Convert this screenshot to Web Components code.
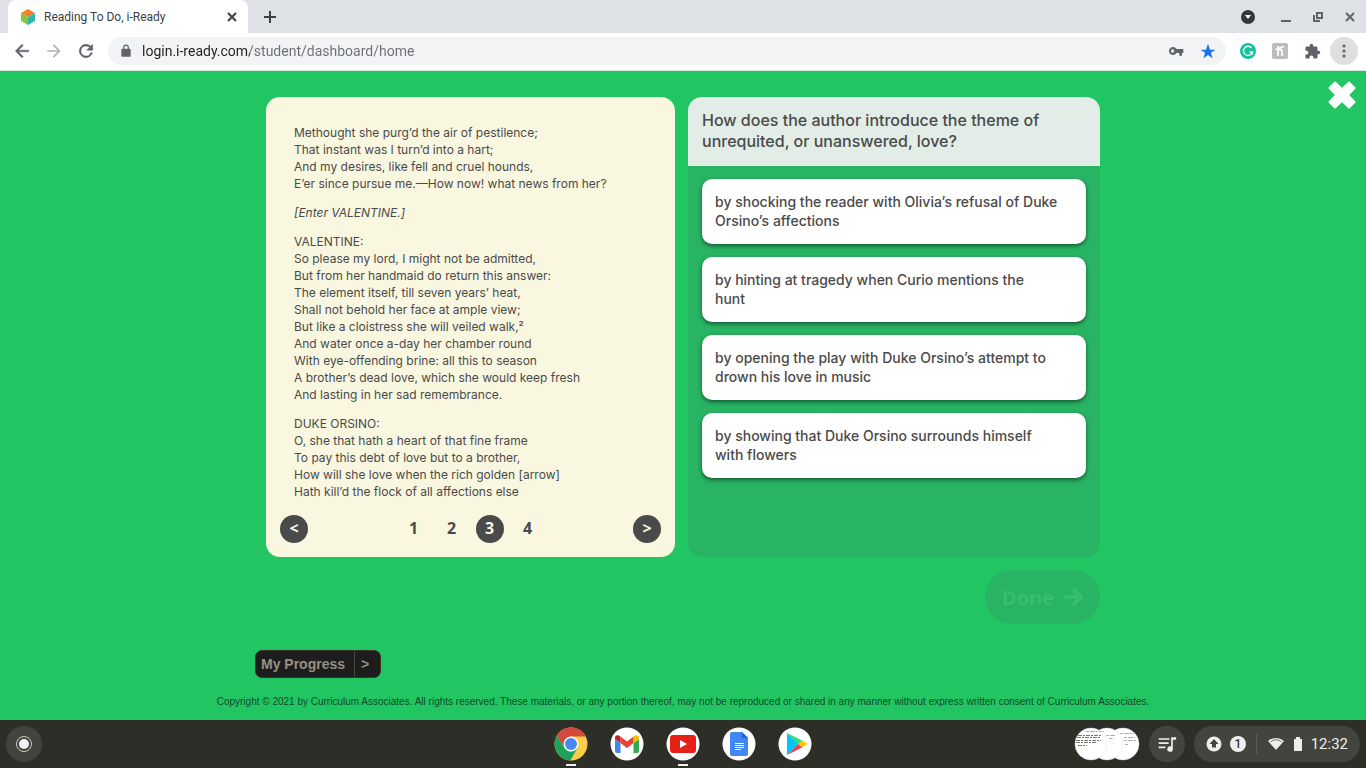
<!DOCTYPE html>
<html lang="en">
<head>
<meta charset="utf-8">
<meta name="viewport" content="width=device-width, initial-scale=1">
<title>Reading To Do, i-Ready</title>
<style>
  html, body {
    margin: 0;
    height: 100%;
  }
  body {
    display: flex;
    flex-direction: column;
    background: #21c663;
    font-family: Roboto, "Liberation Sans", sans-serif;
  }
  lesson-page {
    flex: 1;
  }
  reading-passage p {
    margin: 0 0 12px;
  }
</style>
</head>
<body>
<browser-bar></browser-bar>

<lesson-page>
  <reading-passage slot="passage" page="3" pages="4">
    <p>Methought she purg’d the air of pestilence;<br>
    That instant was I turn’d into a hart;<br>
    And my desires, like fell and cruel hounds,<br>
    E’er since pursue me.—How now! what news from her?</p>
    <p><em>[Enter VALENTINE.]</em></p>
    <p>VALENTINE:<br>
    So please my lord, I might not be admitted,<br>
    But from her handmaid do return this answer:<br>
    The element itself, till seven years’ heat,<br>
    Shall not behold her face at ample view;<br>
    But like a cloistress she will veiled walk,²<br>
    And water once a-day her chamber round<br>
    With eye-offending brine: all this to season<br>
    A brother’s dead love, which she would keep fresh<br>
    And lasting in her sad remembrance.</p>
    <p>DUKE ORSINO:<br>
    O, she that hath a heart of that fine frame<br>
    To pay this debt of love but to a brother,<br>
    How will she love when the rich golden [arrow]<br>
    Hath kill’d the flock of all affections else</p>
  </reading-passage>

  <question-panel slot="question">
    <span slot="title">How does the author introduce the theme of unrequited, or unanswered, love?</span>
    <answer-option>by shocking the reader with Olivia’s refusal of Duke<br>Orsino’s affections</answer-option>
    <answer-option>by hinting at tragedy when Curio mentions the<br>hunt</answer-option>
    <answer-option>by opening the play with Duke Orsino’s attempt to<br>drown his love in music</answer-option>
    <answer-option>by showing that Duke Orsino surrounds himself<br>with flowers</answer-option>
  </question-panel>
</lesson-page>

<system-shelf></system-shelf>

<script>
class BrowserBar extends HTMLElement {
    constructor() {
        super();
        this.attachShadow({ mode: 'open' });
        this.shadowRoot.innerHTML = `
        <style>
        :host {
            display: block;
            background: #fff;
            color: #3c4043;
            border-bottom: 1px solid #d3ead9;
        }
        .tabs {
            display: flex;
            align-items: center;
            height: 33px;
            padding: 0 8px;
            background: #dee1e6;
        }
        .tab {
            display: flex;
            align-items: center;
            box-sizing: border-box;
            width: 240px;
            height: 33px;
            padding: 0 8px 0 12px;
            gap: 8px;
            border-radius: 8px 8px 0 0;
            background: #fff;
            font-size: 12px;
        }
        .tab span {
            flex: 1;
        }
        .window {
            display: flex;
            align-items: center;
            margin-left: auto;
            gap: 16px;
        }
        .window button:first-child {
            margin-right: 6px;
        }
        button {
            display: grid;
            place-items: center;
            flex: none;
            width: 16px;
            height: 16px;
            padding: 0;
            border: 0;
            background: none;
            color: #5f6368;
        }
        .add {
            margin-left: 14px;
            color: #3c4043;
        }
        .tools {
            display: flex;
            align-items: center;
            height: 36px;
            padding: 0 8px 1px;
        }
        .tools > button {
            width: 28px;
            height: 28px;
            margin-right: 4px;
        }
        .tools > button:last-child {
            margin: 0;
            border-radius: 50%;
            background: #dfdfe0;
        }
        .address {
            display: flex;
            align-items: center;
            flex: 1;
            height: 28px;
            margin: 0 8px 0 4px;
            padding: 0 10px 0 11px;
            gap: 9px;
            border-radius: 14px;
            background: #f1f3f4;
        }
        .address button + button {
            margin-left: 7px;
        }
        input {
            flex: 1;
            min-width: 0;
            padding: 0;
            border: 0;
            outline: 0;
            font: 14px/20px Roboto, sans-serif;
            color: transparent;
            background: linear-gradient(90deg, #202124 108px, #6b6f74 108px);
            -webkit-background-clip: text;
            background-clip: text;
        }
        svg {
            display: block;
            fill: currentColor;
        }
        </style>
        <div class="tabs">
            <div class="tab">
                <svg width="16" height="16" viewBox="0 0 16 16">
                    <path fill="#f5812a" d="M8 0l7 4-7 4-7-4z"/>
                    <path fill="#8cc63f" d="M1 4l7 4v8l-7-4z"/>
                    <path fill="#2fb5b5" d="M15 4L8 8v8l7-4z"/>
                </svg>
                <span>Reading To Do, i-Ready</span>
                <button aria-label="Close tab"><svg width="16" height="16" viewBox="0 0 16 16"><path d="M4 4l8 8M12 4l-8 8" stroke="#3c4043" stroke-width="2"/></svg></button>
            </div>
            <button class="add" aria-label="New tab"><svg width="16" height="16" viewBox="0 0 16 16"><path d="M8 2v12M2 8h12" stroke="#3c4043" stroke-width="2"/></svg></button>
            <div class="window">
                <button aria-label="Search tabs"><svg width="14" height="14" viewBox="0 0 14 14"><circle cx="7" cy="7" r="7" fill="#35363a"/><path fill="#fff" d="M4 5h6L7 9z"/></svg></button>
                <button aria-label="Minimize"><svg width="16" height="16" viewBox="0 0 16 16"><path d="M3 11h10v2H3z"/></svg></button>
                <button aria-label="Restore"><svg width="16" height="16" viewBox="0 0 16 16"><path fill="none" stroke="currentColor" stroke-width="2" d="M7 4h5v5H7z"/><path fill="none" stroke="currentColor" stroke-width="2" d="M4 6v6h6"/></svg></button>
                <button aria-label="Close"><svg width="16" height="16" viewBox="0 0 16 16"><path d="M4 4l8 8M12 4l-8 8" stroke="currentColor" stroke-width="2"/></svg></button>
            </div>
        </div>
        <div class="tools">
            <button aria-label="Back"><svg width="20" height="20" viewBox="0 0 24 24"><path stroke="currentColor" stroke-width=".6" d="M20 11H7.800l5.600-5.600L12 4l-8 8 8 8 1.400-1.400L7.800 13H20z"/></svg></button>
            <button aria-label="Forward"><svg width="20" height="20" viewBox="0 0 24 24" fill-opacity=".5"><path d="M12 4l-1.400 1.400 5.600 5.600H4v2h12.200l-5.600 5.600L12 20l8-8z"/></svg></button>
            <button aria-label="Reload"><svg width="20" height="20" viewBox="0 0 24 24"><path stroke="currentColor" stroke-width=".6" d="M17.650 6.350A8 8 0 1 0 19.730 14h-2.080A6 6 0 1 1 12 6c1.660 0 3.140.69 4.220 1.780L13 11h7V4z"/></svg></button>
            <div class="address">
                <svg width="14" height="14" viewBox="0 0 24 24"><path fill="#5f6368" d="M18 8h-1V6A5 5 0 0 0 7 6v2H6a2 2 0 0 0-2 2v10a2 2 0 0 0 2 2h12a2 2 0 0 0 2-2V10a2 2 0 0 0-2-2zM9 6a3 3 0 0 1 6 0v2H9z"/></svg>
                <input type="text" aria-label="Address" value="login.i-ready.com/student/dashboard/home">
                <button aria-label="Passwords"><svg width="16" height="16" viewBox="0 0 24 24"><path fill-rule="evenodd" d="M12.650 9A6 6 0 1 0 12.650 15H17v4h4v-4h2V9zM7 14.500a2.500 2.500 0 1 1 0-5 2.500 2.500 0 0 1 0 5z"/></svg></button>
                <button aria-label="Bookmark"><svg width="16" height="16" viewBox="0 0 24 24"><path fill="#1a73e8" d="M12 18l7 5-2.700-8.200L23.500 10H15L12 1 9 10H.5l7.200 4.800L5 23z"/></svg></button>
            </div>
            <button aria-label="Grammarly"><svg width="16" height="16" viewBox="0 0 16 16"><circle cx="8" cy="8" r="8" fill="#15c39a"/><path fill="none" stroke="#fff" stroke-width="1.300" d="M11.500 4.800A4.600 4.600 0 1 0 12.500 9H9.500M12.400 8.500v3"/></svg></button>
            <button aria-label="Honey"><svg width="16" height="16" viewBox="0 0 16 16"><rect width="16" height="16" rx="2" fill="#bdbdbd"/><path fill="none" stroke="#fff" stroke-width="1.700" d="M6 3v10M6 8c1-2 4-2 4 0v5M3.500 6.500L12 3.500"/></svg></button>
            <button aria-label="Extensions"><svg width="17" height="17" viewBox="0 0 24 24"><path d="M20.500 11H19V7a2 2 0 0 0-2-2h-4V3.500a2.500 2.500 0 0 0-5 0V5H4a2 2 0 0 0-2 2v3.800h1.500a2.700 2.700 0 0 1 0 5.400H2V20a2 2 0 0 0 2 2h3.800v-1.500a2.700 2.700 0 0 1 5.400 0V22H17a2 2 0 0 0 2-2v-4h1.500a2.500 2.500 0 0 0 0-5z"/></svg></button>
            <button aria-label="Menu"><svg width="16" height="16" viewBox="0 0 16 16"><circle cx="8" cy="3" r="1.600"/><circle cx="8" cy="8" r="1.600"/><circle cx="8" cy="13" r="1.600"/></svg></button>
        </div>
        `;
    }
}

class LessonPage extends HTMLElement {
    constructor() {
        super();
        this.attachShadow({ mode: 'open' });
        this.shadowRoot.innerHTML = `
        <style>
        :host {
            display: grid;
            grid-template-columns: 1fr;
            grid-template-rows: 1fr auto;
            color: #4a4a4a;
        }
        .close, main {
            grid-area: 1 / 1;
        }
        .close {
            justify-self: end;
            align-self: start;
            z-index: 1;
            margin: 10px 10px 0 0;
            padding: 0;
            border: 0;
            background: none;
        }
        svg {
            display: block;
        }
        main {
            box-sizing: border-box;
            width: 100%;
            max-width: 856px;
            margin: 0 auto;
            padding-top: 26px;
        }
        .panels {
            display: grid;
            grid-template-columns: 409fr 412fr;
            gap: 13px;
            margin: 0 11px;
        }
        .actions {
            display: flex;
            justify-content: flex-end;
            margin: 13px 11px 26px;
        }
        .done {
            display: flex;
            align-items: center;
            height: 54px;
            padding: 0 17px;
            gap: 9px;
            border: 0;
            border-radius: 27px;
            background: #28b463;
            color: #38be6f;
            font: bold 20px "Open Sans", sans-serif;
        }
        .progress {
            display: flex;
            align-items: center;
            height: 28px;
            padding: 0;
            border: 1px solid #3a3328;
            border-radius: 7px;
            background: #1d1d1d;
            color: #989083;
            font: bold 14px "Liberation Sans", sans-serif;
        }
        .progress span {
            padding: 0 9px 0 5px;
            line-height: 26px;
        }
        .progress span + span {
            padding: 0 11px 0 6px;
            border-left: 1px solid #4a4a44;
        }
        footer {
            grid-row: 2;
            padding-bottom: 12px;
            text-align: center;
            font: 10px/12px "Liberation Sans", sans-serif;
            color: #0c4a24;
        }
        </style>
        <button class="close" aria-label="Close lesson">
            <svg width="28" height="28" viewBox="0 0 28 28"><path d="M7 1.500l7 6.700 7-6.700 5.500 5.500-6.700 7 6.700 7-5.500 5.500-7-6.700-7 6.700L1.500 21l6.700-7-6.700-7z" fill="#fff" stroke="#fff" stroke-width="2" stroke-linejoin="round"/></svg>
        </button>
        <main>
            <div class="panels">
                <slot name="passage"></slot>
                <slot name="question"></slot>
            </div>
            <div class="actions">
                <button class="done">Done <svg width="20" height="20" viewBox="0 0 20 20"><path d="M1 10h17M10 2l8 8-8 8" fill="none" stroke="currentColor" stroke-width="4" stroke-linejoin="round"/></svg></button>
            </div>
            <button class="progress"><span>My Progress</span><span>&gt;</span></button>
        </main>
        <footer>Copyright © 2021 by Curriculum Associates. All rights reserved. These materials, or any portion thereof, may not be reproduced or shared in any manner without express written consent of Curriculum Associates.</footer>
        `;
    }
}

class ReadingPassage extends HTMLElement {
    constructor() {
        super();
        this.attachShadow({ mode: 'open' });
    }

    connectedCallback() {
        const current = Number(this.getAttribute('page')) || 1;
        const total = Number(this.getAttribute('pages')) || 1;
        let numbers = '';
        for (let i = 1; i <= total; i++) {
            numbers += `<button${i === current ? ' class="on" aria-current="page"' : ''}>${i}</button>`;
        }
        this.shadowRoot.innerHTML = `
        <style>
        :host {
            display: flex;
            flex-direction: column;
            box-sizing: border-box;
            min-height: 460px;
            padding: 27px 14px 14px;
            border-radius: 14px;
            background: #f9f7e0;
        }
        .text {
            flex: 1;
            padding: 0 14px;
            font: 12px/17px Inter, sans-serif;
        }
        nav, .numbers {
            display: flex;
            justify-content: space-between;
            gap: 10px;
        }
        button {
            width: 28px;
            height: 28px;
            padding: 0 0 2px;
            border: 0;
            border-radius: 50%;
            background: none;
            color: #4a4a4a;
            font: bold 16px/26px "Open Sans", sans-serif;
        }
        .on, nav > button {
            background: #4a4a4a;
            color: #f9f7e0;
        }
        </style>
        <div class="text"><slot></slot></div>
        <nav>
            <button aria-label="Previous page">&lt;</button>
            <div class="numbers">${numbers}</div>
            <button aria-label="Next page">&gt;</button>
        </nav>
        `;
    }
}

class QuestionPanel extends HTMLElement {
    constructor() {
        super();
        this.attachShadow({ mode: 'open' });
        this.shadowRoot.innerHTML = `
        <style>
        :host {
            display: block;
            overflow: hidden;
            border-radius: 14px;
            background: #28b463;
        }
        h1 {
            margin: 0;
            padding: 13px 14px 14px;
            background: #e1ede6;
            font: 500 16px/21px Inter, sans-serif;
        }
        .answers {
            display: grid;
            gap: 13px;
            padding: 13px 14px;
        }
        </style>
        <h1><slot name="title"></slot></h1>
        <div class="answers"><slot></slot></div>
        `;
    }
}

class AnswerOption extends HTMLElement {
    constructor() {
        super();
        this.attachShadow({ mode: 'open' });
        this.shadowRoot.innerHTML = `
        <style>
        :host {
            display: block;
        }
        button {
            display: block;
            width: 100%;
            padding: 13px 13px 14px;
            border: 0;
            border-radius: 10px;
            background: #fff;
            box-shadow: 0 2px 4px rgba(0, 0, 0, .5);
            color: #4a4a4a;
            font: 500 14px/19px Inter, sans-serif;
            text-align: left;
        }
        </style>
        <button><slot></slot></button>
        `;
    }
}

class SystemShelf extends HTMLElement {
    constructor() {
        super();
        this.attachShadow({ mode: 'open' });
        this.shadowRoot.innerHTML = `
        <style>
        :host {
            display: grid;
            grid-template-columns: 1fr auto 1fr;
            align-items: center;
            height: 48px;
            padding: 0 6px;
            background: #2e2e28;
            color: #eee;
        }
        button {
            display: grid;
            place-items: center;
            height: 36px;
            padding: 0;
            border: 0;
            border-radius: 18px;
            background: none;
            color: inherit;
        }
        svg {
            display: block;
        }
        .round {
            width: 36px;
            background: #44443f;
        }
        .apps {
            display: flex;
            align-items: start;
            height: 48px;
            gap: 20px;
        }
        .apps button {
            width: 36px;
            height: 48px;
            padding-top: 7px;
            align-content: start;
            gap: 3px;
            border-radius: 0;
        }
        .apps .open::after {
            content: "";
            width: 10px;
            height: 2px;
            background: #eee;
        }
        .tray {
            display: flex;
            justify-content: flex-end;
            gap: 9px;
        }
        .status {
            display: flex;
            align-items: center;
            padding: 0 12px;
            gap: 8px;
            background: #44443f;
            font: 15px Roboto, sans-serif;
        }
        .status i {
            width: 1px;
            height: 20px;
            margin: 0 2px;
            background: #5c5c57;
        }
        </style>
        <div><button class="round" aria-label="Launcher"><svg width="18" height="18" viewBox="0 0 18 18"><circle cx="9" cy="9" r="7.500" fill="none" stroke="#c8c8c4"/><circle cx="9" cy="9" r="5" fill="#f2f2f4"/></svg></button></div>
        <div class="apps">
            <button class="open" aria-label="Chrome"><svg width="34" height="34" viewBox="0 0 34 34">
                <circle cx="17" cy="17" r="16.500" fill="#fbcd4a"/>
                <path fill="#d6483b" d="M17 9.500h14.700A16.500 16.500 0 0 0 2.700 8.800l7.800 12z"/>
                <path fill="#1da15f" d="M2.700 8.800A16.500 16.500 0 0 0 16.300 33.500L23.500 20.800 17 24.500a7.500 7.500 0 0 1-6.500-3.700z"/>
                <circle cx="17" cy="17" r="7.500" fill="#fff"/><circle cx="17" cy="17" r="6" fill="#4688f1"/>
            </svg></button>
            <button aria-label="Gmail"><svg width="34" height="34" viewBox="0 0 34 34">
                <circle cx="17" cy="17" r="16.500" fill="#fff"/>
                <path fill="#4285f4" d="M5 12l5.500 4v10H7a2 2 0 0 1-2-2z"/>
                <path fill="#34a853" d="M29 12l-5.500 4v10H27a2 2 0 0 0 2-2z"/>
                <path fill="#ea4335" d="M10.500 9.500L17 14.500l6.500-5V16L17 21l-6.500-5z"/>
                <path fill="#c5221f" d="M5 11c0-3 3-3.500 5.500-1.500V16L5 12z"/>
                <path fill="#fbbc04" d="M29 11c0-3-3-3.500-5.500-1.500V16l5.500-4z"/>
            </svg></button>
            <button class="open" aria-label="YouTube"><svg width="34" height="34" viewBox="0 0 34 34">
                <circle cx="17" cy="17" r="16.500" fill="#fff"/>
                <rect x="4" y="8" width="26" height="18" rx="3" fill="#e62117"/><path fill="#fff" d="M14 13l7 4-7 4z"/>
            </svg></button>
            <button aria-label="Docs"><svg width="34" height="34" viewBox="0 0 34 34">
                <circle cx="17" cy="17" r="16.500" fill="#fff"/>
                <path fill="#4285f4" d="M10 5h10l6 6v16a2 2 0 0 1-2 2H10a2 2 0 0 1-2-2V7a2 2 0 0 1 2-2z"/>
                <path fill="#1967d2" d="M20 5v6h6z"/>
                <path stroke="#fff" d="M13 16.500h9M13 18.500h9M13 20.500h9M13 22.500h6"/>
            </svg></button>
            <button aria-label="Play Store"><svg width="34" height="34" viewBox="0 0 34 34">
                <circle cx="17" cy="17" r="16.500" fill="#fff"/>
                <path fill="#00c4ff" d="M9 6v22l11-11z"/>
                <path fill="#2bdb90" d="M9 6l16 8-5 4z"/>
                <path fill="#ffc400" d="M24 13.500l5.500 3.500-5.500 3.500-4-3.500z"/>
                <path fill="#ef4050" d="M9 28l15-7.500-4-3.500z"/>
            </svg></button>
        </div>
        <div class="tray">
            <button aria-label="Recent captures"><svg width="66" height="34" viewBox="0 0 66 34">
                <g fill="#fff" stroke="#e2e2e2" stroke-width=".5"><circle cx="49" cy="17" r="16"/><circle cx="33" cy="17" r="16"/><circle cx="17" cy="17" r="16"/></g>
                <path stroke="#999" stroke-width=".8" stroke-dasharray="3 1 5 1 2 1" fill="none" d="M12 4.500h18M46 6.500h14M32 8.500h10M35 11.500h5M50 10.500h11M50 13.500h12M51 17.500h3"/>
                <path stroke="#666" stroke-width=".9" stroke-dasharray="4 1 2 1" fill="none" d="M4 8.500h23M3 10.500h24M2 13.500h25M2 15.500h20M4 18.500h9"/>
            </svg></button>
            <button class="round" aria-label="Media controls"><svg width="20" height="20" viewBox="0 0 24 24" fill="#eee"><path d="M2 5h13v2H2zM2 10h12v2H2zM2 15h8v2H2zM17 4h6v3h-4v11a3.300 3.300 0 1 1-2-3z"/></svg></button>
            <button class="status">
                <svg width="16" height="16" viewBox="0 0 16 16"><circle cx="8" cy="8" r="7.500" fill="#eee"/><path fill="#44443f" d="M8 3l4.500 5H10v3.500H6V8H3.500z"/></svg>
                <svg width="16" height="16" viewBox="0 0 16 16"><circle cx="8" cy="8" r="8" fill="#eee"/><text x="8" y="12" text-anchor="middle" font-family="Roboto" font-weight="500" font-size="12" fill="#33332e">1</text></svg>
                <i></i>
                <svg width="18" height="18" viewBox="0 0 18 18"><path fill="#eee" d="M9 15L1 6a12 12 0 0 1 16 0z"/><path d="M3.500 6.700a9.500 9.500 0 0 1 11 0" fill="none" stroke="#77776f"/></svg>
                <svg width="10" height="16" viewBox="0 0 10 16"><path fill="#eee" d="M3 1h4v2h2v12H1V3h2z"/></svg>
                <span>12:32</span>
            </button>
        </div>
        `;
    }
}

customElements.define('browser-bar', BrowserBar);
customElements.define('lesson-page', LessonPage);
customElements.define('reading-passage', ReadingPassage);
customElements.define('question-panel', QuestionPanel);
customElements.define('answer-option', AnswerOption);
customElements.define('system-shelf', SystemShelf);
</script>
</body>
</html>
